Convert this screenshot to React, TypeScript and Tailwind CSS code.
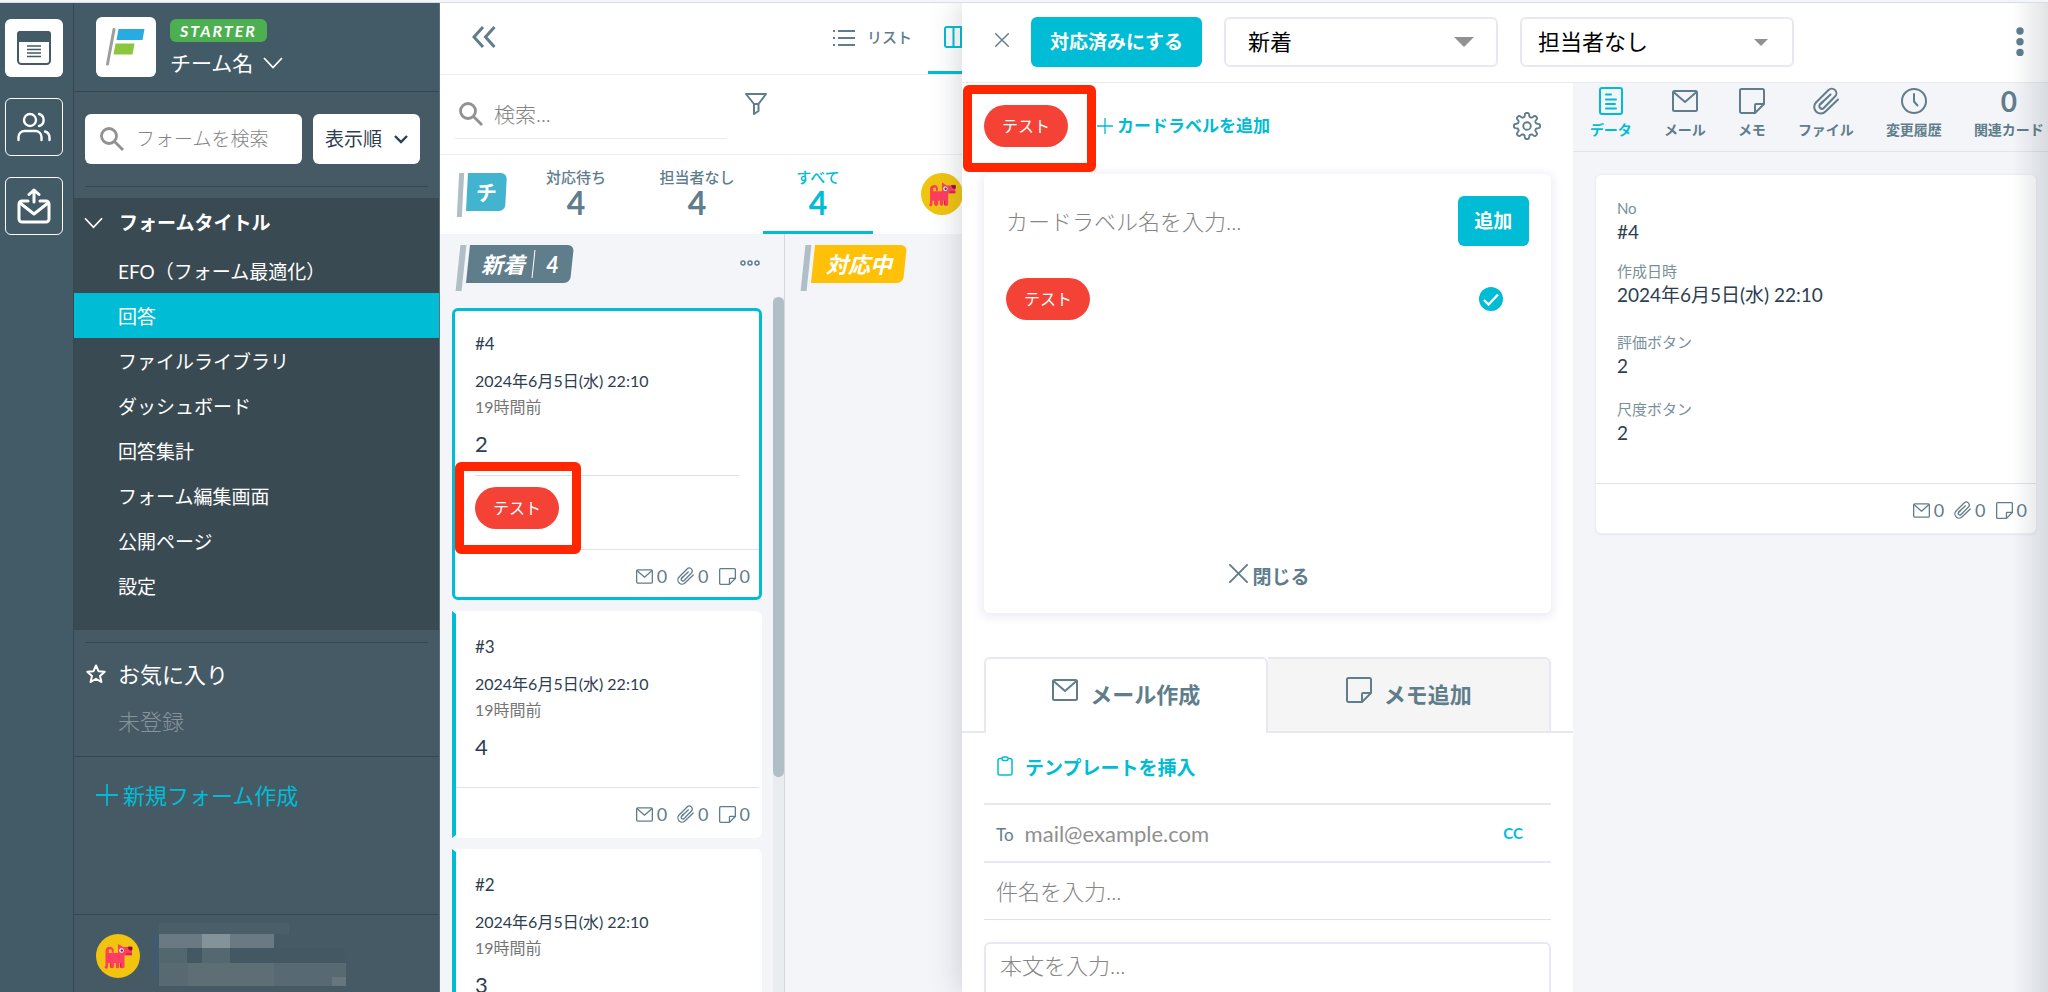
import React from 'react';

interface IconProps {
  className?: string;
}

interface BoardCard {
  no: string;
  value: string;
  labels: string[];
  selected?: boolean;
}

const menuItems = [
  'EFO（フォーム最適化）',
  '回答',
  'ファイルライブラリ',
  'ダッシュボード',
  '回答集計',
  'フォーム編集画面',
  '公開ページ',
  '設定',
];

const counters = [
  { label: '対応待ち', count: 4 },
  { label: '担当者なし', count: 4 },
  { label: 'すべて', count: 4, active: true },
];

const cards: BoardCard[] = [
  { no: '#4', value: '2', labels: ['テスト'], selected: true },
  { no: '#3', value: '4', labels: [] },
  { no: '#2', value: '3', labels: [] },
];

const details = [
  { label: 'No', value: '#4' },
  { label: '作成日時', value: '2024年6月5日(水) 22:10' },
  { label: '評価ボタン', value: '2' },
  { label: '尺度ボタン', value: '2' },
];

/* ---------- icons ---------- */

const MailIcon: React.FC<IconProps> = ({ className }) => (
  <svg viewBox="0 0 26 22" className={className} fill="none" stroke="currentColor" strokeWidth="2" strokeLinejoin="round">
    <rect x="1" y="1" width="24" height="20" rx="1.5" />
    <path d="M1.500 2l11.500 10L24.500 2" />
  </svg>
);

const NoteIcon: React.FC<IconProps> = ({ className }) => (
  <svg viewBox="0 0 26 26" className={className} fill="none" stroke="currentColor" strokeWidth="2" strokeLinejoin="round">
    <path d="M2.500 1h21a1.500 1.500 0 0 1 1.500 1.500V16l-9 9H2.500A1.500 1.500 0 0 1 1 23.500v-21A1.500 1.500 0 0 1 2.500 1z" />
    <path d="M16 25v-8a1 1 0 0 1 1-1h8" />
  </svg>
);

const ClipIcon: React.FC<IconProps> = ({ className }) => (
  <svg viewBox="0 0 26 28" className={className} fill="none" stroke="currentColor" strokeWidth="2" strokeLinecap="round">
    <path d="M25 12.500L12.500 24.500a6.500 6.500 0 0 1-9.500-9L15.500 3a4.600 4.600 0 0 1 6.700 6.300L10.800 21a2.600 2.600 0 0 1-3.800-3.600L17.500 7.500" />
    <path d="M7 17.400L10 14.500" />
  </svg>
);

const ClockIcon: React.FC<IconProps> = ({ className }) => (
  <svg viewBox="0 0 26 26" className={className} fill="none" stroke="currentColor" strokeWidth="2" strokeLinecap="round" strokeLinejoin="round">
    <circle cx="13" cy="13" r="12" />
    <path d="M13 6v7.500l3.500 4" />
  </svg>
);

const DataIcon: React.FC<IconProps> = ({ className }) => (
  <svg viewBox="0 0 24 28" className={className} fill="none" stroke="currentColor" strokeWidth="2">
    <rect x="1" y="1" width="22" height="26" rx="2" />
    <path d="M7 7.500h5M7 12.500h10M7 17h9M7 21.500h10" strokeLinecap="round" />
  </svg>
);

const SearchIcon: React.FC<IconProps> = ({ className }) => (
  <svg viewBox="0 0 24 24" className={className} fill="none" stroke="currentColor" strokeWidth="2.800">
    <circle cx="9" cy="9" r="7.500" />
    <path d="M14.500 14.500l8.500 8.500" />
  </svg>
);

const ChevronIcon: React.FC<IconProps> = ({ className }) => (
  <svg viewBox="0 0 20 12" className={className} fill="none" stroke="currentColor" strokeWidth="1.800">
    <path d="M1 1l9 9.500L19 1" />
  </svg>
);

const CloseIcon: React.FC<IconProps> = ({ className }) => (
  <svg viewBox="0 0 20 20" className={className} fill="none" stroke="currentColor" strokeWidth="2" strokeLinecap="round">
    <path d="M1 1l18 18M19 1L1 19" />
  </svg>
);

const PlusIcon: React.FC<IconProps> = ({ className }) => (
  <svg viewBox="0 0 22 22" className={className} fill="none" stroke="currentColor" strokeWidth="1.800">
    <path d="M11 0v22M0 11h22" />
  </svg>
);

// eight soft teeth around the hub
const gearOutline = Array.from({ length: 160 }, (_, i) => {
  const angle = (i / 160) * Math.PI * 2;
  const radius = 11.2 + 1.9 * Math.tanh(2.2 * Math.cos(8 * angle));
  return `${(14 + radius * Math.cos(angle)).toFixed(2)},${(14 + radius * Math.sin(angle)).toFixed(2)}`;
}).join(' ');

const GearIcon: React.FC<IconProps> = ({ className }) => (
  <svg viewBox="0 0 28 28" className={className} fill="none" stroke="currentColor" strokeWidth="1.900" strokeLinejoin="round">
    <polygon points={gearOutline} />
    <circle cx="14" cy="14" r="3.800" />
  </svg>
);

const DogAvatar: React.FC<IconProps> = ({ className }) => (
  <svg viewBox="0 0 44 44" className={className}>
    <circle cx="22" cy="22" r="22" fill="#f1c40f" />
    <path d="M14 28h3.200v4.500a1.500 1.500 0 0 1-3.200 0zM24 28h3.500v4.500a1.500 1.500 0 0 1-3.500 0z" fill="#d81b60" />
    <path d="M9.500 32V17a4.300 4.300 0 0 1 8.200-1.800v3.500h-2V16.500a1.500 1.500 0 0 0-3 .5v2H22V10l5 3h9v8.500h-7.500V33a1.700 1.700 0 0 1-3.300 0v-4h-2v4a1.700 1.700 0 0 1-3.300 0v-4h-2v4a1.700 1.700 0 0 1-3.300 0v-4h-2.600v4a1.700 1.700 0 0 1-3.500 0z" fill="#ff3d60" />
    <circle cx="25.500" cy="16.500" r="2.300" fill="#fff" />
    <circle cx="25.800" cy="16.500" r="1.300" fill="#37474f" />
    <path d="M32 13h4v3h-2.500zM30 20h6" fill="#8e0f3c" stroke="#8e0f3c" strokeWidth=".8" />
  </svg>
);

/* ---------- shared parts ---------- */

const LabelPill: React.FC<{ text: string }> = ({ text }) => (
  <span className="flex h-[42px] w-[84px] items-center justify-center rounded-full bg-[#f44336] text-base leading-none text-white">
    {text}
  </span>
);

const CardCounts: React.FC = () => (
  <div className="flex items-center justify-end gap-[10px] text-lg leading-none text-[#607d8b]">
    <span className="flex items-center gap-1">
      <MailIcon className="h-[15px] w-[17px]" />0
    </span>
    <span className="flex items-center gap-1">
      <ClipIcon className="h-[18px] w-[17px]" />0
    </span>
    <span className="flex items-center gap-1">
      <NoteIcon className="h-[17px] w-[17px]" />0
    </span>
  </div>
);

const StatusTag: React.FC<{ color: string; children: React.ReactNode }> = ({ color, children }) => (
  <div className="flex items-start gap-1">
    <span className="h-[46px] w-[6px] -skew-x-6 bg-[#b0bec5]" />
    <div className="relative flex h-[38px] items-center px-[13px] text-[22px] font-bold italic text-white">
      <span className={`absolute inset-0 -skew-x-6 rounded-r-md ${color}`} />
      <span className="relative flex items-center gap-2">{children}</span>
    </div>
  </div>
);

/* ---------- left side ---------- */

const IconRail: React.FC = () => (
  <nav className="flex w-[74px] shrink-0 flex-col gap-[21px] border-r border-[#37474f] bg-[#435b66] pt-4 pl-[5px] text-white">
    <button aria-label="フォーム" className="flex h-[58px] w-[58px] items-center justify-center rounded-md bg-white text-[#435b66]">
      <svg viewBox="0 0 34 34" className="h-[34px] w-[34px]" fill="none" stroke="currentColor" strokeWidth="2">
        <rect x="1" y="1" width="32" height="32" rx="3.500" />
        <path d="M1 3a2 2 0 0 1 2-2h28a2 2 0 0 1 2 2v7H1z" fill="currentColor" />
        <path d="M10 15h14M10 18.500h14M10 22h14M10 25.500h14" strokeWidth="1.600" />
      </svg>
    </button>
    <button aria-label="メンバー" className="flex h-[58px] w-[58px] items-center justify-center rounded-md border border-white">
      <svg viewBox="0 0 34 30" className="h-[30px] w-[34px]" fill="none" stroke="currentColor" strokeWidth="2.400" strokeLinecap="round">
        <circle cx="13" cy="8" r="6" />
        <path d="M1.500 28v-3a6 6 0 0 1 6-6h11a6 6 0 0 1 6 6v3M22 2a6.200 6.200 0 0 1 0 12M28 19.500a6.500 6.500 0 0 1 4.500 6V28" />
      </svg>
    </button>
    <button aria-label="送信" className="flex h-[58px] w-[58px] items-center justify-center rounded-md border border-white">
      <svg viewBox="0 0 34 36" className="h-9 w-[34px]" fill="none" stroke="currentColor" strokeWidth="3" strokeLinecap="round" strokeLinejoin="round">
        <path d="M11 13H5a3 3 0 0 0-3 3v15a3 3 0 0 0 3 3h24a3 3 0 0 0 3-3V16a3 3 0 0 0-3-3h-6" />
        <path d="M3 15l14 11 14-11M17 14V2M12 6.500L17 2l5 4.500" />
      </svg>
    </button>
  </nav>
);

const Sidebar: React.FC = () => (
  <aside className="flex w-[366px] shrink-0 flex-col border-r border-[#5f6f79] bg-[#465a65] text-white">
    <header className="flex h-[89px] shrink-0 gap-[14px] border-b border-[#37474f] bg-[#435b66] pt-[14px] pl-[22px]">
      <span className="flex h-[60px] w-[60px] items-center justify-center rounded-md bg-white">
        <svg viewBox="0 0 40 38" className="h-[38px] w-10">
          <path d="M8 1.500L1.500 36" stroke="#9e9e9e" strokeWidth="3" strokeLinecap="round" />
          <path d="M12.500 1h26L36.500 12H10.500z" fill="#29abe2" />
          <path d="M9.500 15.500H28.500L26.500 26.500H7.500z" fill="#8cc63f" />
        </svg>
      </span>
      <div>
        <span className="mt-[2px] flex h-[23px] w-[97px] items-center justify-center rounded-md bg-[#4caf50] text-base font-bold tracking-[2px] italic">
          STARTER
        </span>
        <button className="mt-[7px] flex items-center gap-[10px] text-[21px] leading-[28px]">
          チーム名
          <ChevronIcon className="h-3 w-5" />
        </button>
      </div>
    </header>

    <div className="mx-[11px] flex h-[95px] shrink-0 items-start gap-[11px] border-b border-[#37474f] pt-[22px]">
      <label className="flex h-[50px] w-[217px] items-center gap-3 rounded-md bg-white px-[15px] text-[#919191]">
        <SearchIcon className="h-6 w-6 shrink-0" />
        <input placeholder="フォームを検索" aria-label="フォームを検索" className="w-full min-w-0 text-[19px] placeholder:font-light placeholder:text-[#858585] focus:outline-none" />
      </label>
      <button className="flex h-[50px] w-[107px] items-center justify-between rounded-md bg-white px-3 text-[19px] text-[#2c3e50]">
        表示順
        <svg viewBox="0 0 14 9" className="h-[9px] w-[14px]" fill="none" stroke="currentColor" strokeWidth="2.400">
          <path d="M1 1l6 6 6-6" />
        </svg>
      </button>
    </div>

    <section className="mt-[11px] shrink-0 bg-[#394a52] pb-[22px]">
      <button className="flex h-[50px] w-full items-center gap-4 pl-[10px] text-[19px] font-bold">
        <ChevronIcon className="h-3 w-[19px]" />
        フォームタイトル
      </button>
      <ul>
        {menuItems.map((item) => (
          <li key={item}>
            <a
              href="#"
              className={`flex h-[45px] items-center pt-[3px] pl-11 text-[19px] ${item === '回答' ? 'bg-[#00bcd4]' : ''}`}
            >
              {item}
            </a>
          </li>
        ))}
      </ul>
    </section>

    <section className="shrink-0 border-b border-[#37474f] pt-3 pb-[18px]">
      <div className="mx-[11px] border-t border-[#37474f]" />
      <button className="mt-[15px] flex h-8 items-center gap-3 pl-3 text-[22px]">
        <svg viewBox="0 0 20 20" className="h-5 w-5" fill="none" stroke="currentColor" strokeWidth="2" strokeLinejoin="round">
          <path d="M10 1.500l2.500 5.700 6.200.6-4.700 4.100 1.400 6.100L10 14.800 4.600 18 6 11.900 1.300 7.800l6.200-.6z" />
        </svg>
        お気に入り
      </button>
      <p className="mt-4 pl-11 text-[22px] leading-8 font-light text-[#86949d]">未登録</p>
    </section>

    <button className="flex h-[76px] shrink-0 items-center gap-[5px] pl-[22px] text-[22px] text-[#00bcd4]">
      <PlusIcon className="h-[22px] w-[22px]" />
      新規フォーム作成
    </button>

    <footer className="mt-auto flex h-[78px] shrink-0 items-start gap-3 border-t border-[#37474f] pt-2 pl-[22px]">
      <DogAvatar className="mt-[11px] h-11 w-11" />
      {/* account name and address stay masked */}
      <svg viewBox="0 0 224 63" className="h-[63px] w-[224px]">
        <path d="M7 0h130v11H7z" fill="#4a5f69" />
        <path d="M0 11h7v43H0z" fill="#415a70" />
        <path d="M7 11h115v14H7z" fill="#697a82" />
        <path d="M50 11h28v14H50z" fill="#84929a" />
        <path d="M7 25h43v15H7z" fill="#53676f" />
        <path d="M35 25h15v15H35zM78 25h115v15H78z" fill="#435862" />
        <path d="M50 25h28v15H50z" fill="#536870" />
        <path d="M7 40h187v23H7z" fill="#576a72" />
        <path d="M36 40h86v23H36z" fill="#5d6e74" />
        <path d="M180 54h14v9h-14z" fill="#65767e" />
      </svg>
    </footer>
  </aside>
);

/* ---------- board ---------- */

const AnswerCard: React.FC<{ card: BoardCard }> = ({ card }) => (
  <article
    className={
      card.selected
        ? 'rounded-md border-[3px] border-[#00bcd4] bg-white'
        : 'rounded-r-md border-y-[3px] border-r-[3px] border-l-4 border-y-white border-r-white border-l-[#00bcd4] bg-white'
    }
  >
    <div className={card.selected ? 'px-5 pt-[21px]' : 'pr-5 pl-[19px] pt-[21px]'}>
      <p className="text-[17px] leading-6 text-[#2c3e50]">{card.no}</p>
      <p className="mt-[13px] text-base leading-6 text-[#2c3e50]">2024年6月5日(水) 22:10</p>
      <p className="mt-[2px] text-base leading-6 text-[#757575]">19時間前</p>
      <p className="mt-[9px] text-[22px] leading-8 text-[#2c3e50]">{card.value}</p>
      {card.labels.length > 0 ? (
        <div className="mt-[15px] border-t border-[#e0e0e0] pt-[11px] pb-5">
          {card.labels.map((label) => (
            <div key={label} className="relative w-fit">
              <LabelPill text={label} />
              <span className="absolute -top-[25px] -left-5 h-[92px] w-[126px] rounded-md border-[9px] border-[#ff2600]" />
            </div>
          ))}
        </div>
      ) : (
        <div className="h-6" />
      )}
    </div>
    <div className="border-t border-[#e0e4e8] pt-[17px] pr-[9px] pb-[10px]">
      <div className="h-5">
        <CardCounts />
      </div>
    </div>
  </article>
);

const Board: React.FC = () => (
  <main className="flex min-w-0 flex-1 flex-col bg-white text-[#607d8b]">
    <header className="flex h-[72px] shrink-0 items-stretch border-b border-[#eceff1] pl-8">
      <button aria-label="サイドバーを閉じる">
        <svg viewBox="0 0 24 22" className="-mt-1 h-[22px] w-6" fill="none" stroke="currentColor" strokeWidth="3">
          <path d="M11 1L2 11l9 10M22.500 1l-9 10 9 10" />
        </svg>
      </button>
      <button className="ml-[337px] flex items-center gap-3 pb-[2px] text-[15px] font-medium">
        <svg viewBox="0 0 22 18" className="h-[18px] w-[22px]" stroke="currentColor" strokeWidth="2">
          <path d="M5 2h17M5 9h17M5 16h17M0 2h2M0 9h2M0 16h2" />
        </svg>
        リスト
      </button>
      <button className="ml-4 flex items-center gap-3 border-b-[3px] border-[#00bcd4] pr-4 pl-4 text-[15px] font-medium text-[#00bcd4]">
        <svg viewBox="0 0 26 22" className="h-[22px] w-[26px]" fill="none" stroke="currentColor" strokeWidth="2">
          <rect x="1" y="1" width="24" height="20" rx="2" />
          <path d="M9.500 1v20M17 1v20" />
        </svg>
        ボード
      </button>
    </header>

    <div className="flex h-20 shrink-0 items-start gap-[18px] border-b border-[#eceff1] pt-[18px] pl-[15px]">
      <label className="flex h-[46px] w-[272px] items-center gap-[11px] border-b border-[#e8eaec] pb-1 pl-1 text-[#919191]">
        <SearchIcon className="h-6 w-6 shrink-0" />
        <input placeholder="検索..." aria-label="検索" className="w-full min-w-0 text-[21px] placeholder:font-light placeholder:text-[#858585] focus:outline-none" />
      </label>
      <button aria-label="絞り込み">
        <svg viewBox="0 0 22 22" className="h-[22px] w-[22px]" fill="none" stroke="currentColor" strokeWidth="2" strokeLinejoin="round">
          <path d="M1 1h20l-7.500 10v7L9 21V11zM9 11h4.500" />
        </svg>
      </button>
    </div>

    <div className="flex h-[79px] shrink-0">
      <div className="flex items-start gap-1 pt-[18px] pl-[18px]">
        <span className="h-11 w-[5px] -skew-x-3 bg-[#b0bec5]" />
        <div className="relative flex h-[38px] w-[39px] items-center justify-center text-[21px] font-bold text-white">
          <span className="absolute inset-0 -skew-x-3 rounded-r-md bg-[#42b4cf]" />
          <span className="relative">チ</span>
        </div>
      </div>
      <div className="ml-[15px] flex gap-[11px]">
        {counters.map((counter) => (
          <button
            key={counter.label}
            className={`flex w-[110px] flex-col items-center border-b-[3px] pt-3 font-medium ${
              counter.active ? 'border-[#00bcd4] text-[#00bcd4]' : 'border-transparent'
            }`}
          >
            <span className="text-[15px] leading-5">{counter.label}</span>
            <span className="text-[32px] leading-8 font-bold">{counter.count}</span>
          </button>
        ))}
      </div>
      <DogAvatar className="mt-[18px] ml-12 h-[42px] w-[42px]" />
    </div>

    <div className="flex min-h-0 flex-1 bg-[#f4f5f9]">
      <section className="flex w-[345px] shrink-0 flex-col border-r border-[#d5d9dd]">
        <div className="flex h-[63px] shrink-0 items-start justify-between pt-[11px] pr-6 pl-[18px]">
          <StatusTag color="bg-[#607d8b]">
            新着
            <span className="h-[28px] w-px -skew-x-6 bg-white" />
            <span className="pl-1">4</span>
          </StatusTag>
          <button aria-label="列メニュー" className="mt-[15px]">
            <svg viewBox="0 0 20 6" className="h-[6px] w-5" fill="none" stroke="currentColor" strokeWidth="1.500">
              <circle cx="3" cy="3" r="2" />
              <circle cx="10" cy="3" r="2" />
              <circle cx="17" cy="3" r="2" />
            </svg>
          </button>
        </div>
        <div className="flex min-h-0 flex-1 justify-between overflow-hidden">
          <div className="flex flex-1 flex-col gap-[11px] pt-[11px] pr-[11px] pl-3">
            {cards.map((card) => (
              <AnswerCard key={card.no} card={card} />
            ))}
          </div>
          <div className="w-[11px] bg-[#e9edf0]">
            <div className="h-[69%] rounded-full bg-[#b0bec5]" />
          </div>
        </div>
      </section>
      <section className="flex-1 pt-[11px] pl-[18px]">
        <StatusTag color="bg-[#ffc107]">対応中</StatusTag>
      </section>
    </div>
  </main>
);

/* ---------- drawer ---------- */

const LabelEditor: React.FC = () => (
  <>
    <div className="flex h-[91px] shrink-0 items-center pr-8 pb-[5px] pl-[22px]">
      <div className="relative">
        <LabelPill text="テスト" />
        <span className="absolute -top-5 -left-[21px] h-[87px] w-[133px] rounded-md border-[9px] border-[#ff2600]" />
      </div>
      <button className="ml-[29px] flex items-center gap-1 text-[17px] font-bold text-[#00bcd4]">
        <PlusIcon className="h-4 w-4" />
        カードラベルを追加
      </button>
      <button aria-label="ラベル設定" className="ml-auto text-[#607d8b]">
        <GearIcon className="h-7 w-7" />
      </button>
    </div>
    <section className="mx-[22px] flex h-[439px] shrink-0 flex-col rounded-md bg-white px-[22px] pt-[22px] pb-5 shadow-[0_2px_10px_3px_#ededf7]">
      <div className="flex h-[50px] items-center justify-between gap-4">
        <input placeholder="カードラベル名を入力..." aria-label="カードラベル名" className="min-w-0 flex-1 text-[22px] placeholder:font-light placeholder:text-[#858585] focus:outline-none" />
        <button className="h-[50px] w-[71px] rounded-md bg-[#00bcd4] text-[19px] font-bold text-white">追加</button>
      </div>
      <div className="mt-8 flex items-center justify-between pr-[26px]">
        <LabelPill text="テスト" />
        <svg viewBox="0 0 24 24" className="h-6 w-6">
          <circle cx="12" cy="12" r="12" fill="#00bcd4" />
          <path d="M5 13l4.500 4.500L19 7.500" fill="none" stroke="#fff" strokeWidth="2.400" />
        </svg>
      </div>
      <button className="mx-auto mt-auto flex items-center gap-1 pl-1 text-[19px] leading-8 font-bold text-[#607d8b]">
        <CloseIcon className="mb-2 h-[19px] w-[19px]" />
        閉じる
      </button>
    </section>
  </>
);

const MailComposer: React.FC = () => (
  <>
    <div className="mt-11 flex h-[76px] shrink-0 text-[22px] font-bold text-[#607d8b]" role="tablist">
      <span className="w-[22px] border-b-2 border-[#e8e8f4]" />
      <button role="tab" className="flex flex-1 items-center justify-center gap-3 rounded-t-md border-x-2 border-t-2 border-[#e8e8f4] pb-1">
        <MailIcon className="mb-2 h-[22px] w-[26px]" />
        メール作成
      </button>
      <button role="tab" className="flex flex-1 items-center justify-center gap-3 rounded-tr-md border-y-2 border-r-2 border-[#e8e8f4] bg-[#f5f5f5] pb-[2px]">
        <NoteIcon className="mb-2 h-[26px] w-[26px]" />
        メモ追加
      </button>
      <span className="w-[22px] border-b-2 border-[#e8e8f4]" />
    </div>
    <div className="px-[22px]">
      <button className="flex h-[72px] w-full items-center gap-3 border-b-2 border-[#e8e8f4] pl-[13px] text-[19px] font-bold text-[#00bcd4]">
        <svg viewBox="0 0 16 20" className="mb-1 h-5 w-4" fill="none" stroke="currentColor" strokeWidth="1.500">
          <rect x="1" y="2.500" width="14" height="16.500" rx="2" />
          <rect x="5" y="1" width="6" height="3.500" rx="1.500" fill="#fff" />
        </svg>
        テンプレートを挿入
      </button>
      <div className="flex h-[58px] items-center gap-[11px] border-b-2 border-[#e8e8f4] pr-7 pl-3 text-[17px] text-[#607d8b]">
        <label htmlFor="mail-to" className="pt-[3px]">To</label>
        <input id="mail-to" type="email" placeholder="mail@example.com" className="min-w-0 flex-1 text-[22px] placeholder:text-[#8f8f8f] focus:outline-none" />
        <button className="text-[15px] font-bold text-[#00bcd4]">CC</button>
      </div>
      <input placeholder="件名を入力..." aria-label="件名" className="block h-[57px] w-full border-b border-[#e0e0f0] px-3 text-[22px] placeholder:font-light placeholder:text-[#858585] focus:outline-none" />
      <textarea placeholder="本文を入力..." aria-label="本文" className="mt-[22px] block h-40 w-full resize-none rounded-md border-2 border-[#e8e8f4] px-[14px] py-[6px] text-[22px] leading-8 placeholder:font-light placeholder:text-[#858585] focus:outline-none" />
    </div>
  </>
);

const detailTabs = [
  { label: 'データ', icon: <DataIcon className="h-7 w-6" />, active: true },
  { label: 'メール', icon: <MailIcon className="h-[22px] w-[26px]" /> },
  { label: 'メモ', icon: <NoteIcon className="h-[26px] w-[26px]" /> },
  { label: 'ファイル', icon: <ClipIcon className="h-7 w-[26px]" /> },
  { label: '変更履歴', icon: <ClockIcon className="h-[26px] w-[26px]" /> },
  { label: '関連カード', icon: <span className="text-[28px] leading-7">0</span> },
];

const DetailPane: React.FC = () => (
  <div className="min-w-0 bg-[#f4f5f9]">
    <div className="flex h-[69px] gap-8 border-b border-[#e2e4ea] pt-1 pl-[17px] text-[#607d8b]">
      {detailTabs.map((tab) => (
        <button
          key={tab.label}
          className={`flex shrink-0 flex-col items-center gap-[5px] font-bold ${tab.active ? 'text-[#00bcd4]' : ''}`}
        >
          <span className="flex h-7 items-center">{tab.icon}</span>
          <span className="text-sm leading-5">{tab.label}</span>
        </button>
      ))}
    </div>
    <section className="mt-[22px] mr-[11px] ml-[22px] rounded-md border border-[#ededf7] bg-white shadow-[0_1px_2px_#e6e6f2]">
      <dl className="flex flex-col gap-[19px] px-[21px] pt-[21px] pb-[38px]">
        {details.map((item) => (
          <div key={item.label} className="first:-mb-1 nth-2:mb-1">
            <dt className="text-[15px] leading-6 text-[#78909c]">{item.label}</dt>
            <dd className="text-[19px] leading-6 text-[#2c3e50]">{item.value}</dd>
          </div>
        ))}
      </dl>
      <div className="border-t border-[#e0e4ea] pt-[17px] pr-[9px] pb-3">
        <div className="h-5">
          <CardCounts />
        </div>
      </div>
    </section>
  </div>
);

const Drawer: React.FC = () => (
  <div className="absolute inset-y-0 right-0 left-[522px] flex flex-col bg-white shadow-[0_0_30px_rgba(55,71,79,0.25)]">
    <header className="flex h-20 shrink-0 items-center gap-[22px] border-b border-[#e8eaee] pr-6 pb-px pl-[33px]">
      <button aria-label="閉じる" className="mb-1 text-[#607d8b]">
        <CloseIcon className="h-[14px] w-[14px]" />
      </button>
      <button className="h-[50px] w-[171px] rounded-md bg-[#00bcd4] text-[19px] font-bold text-white">対応済みにする</button>
      <div className="relative">
        <select aria-label="ステータス" className="h-[50px] w-[274px] appearance-none rounded-md border-2 border-[#e8e8f4] bg-white px-[22px] pb-[2px] text-[22px] text-black">
          <option>新着</option>
        </select>
        <svg viewBox="0 0 20 10" className="pointer-events-none absolute top-5 right-6 h-[10px] w-5" fill="#919191">
          <path d="M0 0h20L10 10z" />
        </svg>
      </div>
      <div className="relative">
        <select aria-label="担当者" className="h-[50px] w-[274px] appearance-none rounded-md border-2 border-[#e8e8f4] bg-white px-4 pb-[2px] text-[22px] text-black">
          <option>担当者なし</option>
        </select>
        <svg viewBox="0 0 14 7" className="pointer-events-none absolute top-[22px] right-[26px] h-[7px] w-[14px]" fill="#919191">
          <path d="M0 0h14L7 7z" />
        </svg>
      </div>
      <button aria-label="その他" className="ml-auto text-[#607d8b]">
        <svg viewBox="0 0 8 30" className="h-[30px] w-2" fill="currentColor">
          <circle cx="4" cy="4" r="3.700" />
          <circle cx="4" cy="14.700" r="3.700" />
          <circle cx="4" cy="25.400" r="3.700" />
        </svg>
      </button>
    </header>
    <div className="grid min-h-0 flex-1 grid-cols-[9fr_7fr] overflow-hidden">
      <div className="flex min-w-0 flex-col">
        <LabelEditor />
        <MailComposer />
      </div>
      <DetailPane />
    </div>
    <span className="pointer-events-none absolute inset-y-0 right-0 w-9 bg-linear-to-l from-[#37474f]/15 to-transparent" />
  </div>
);

const App: React.FC = () => {
  return (
    <div
      lang="ja"
      className="flex h-screen flex-col overflow-hidden font-['Lato','Noto_Sans_CJK_JP',sans-serif]"
    >
      <div className="h-[3px] shrink-0 border-b border-[#d5dde6] bg-[#f4f5f9]" />
      <div className="relative flex min-h-0 flex-1">
        <IconRail />
        <Sidebar />
        <div className="relative flex min-w-0 flex-1 overflow-hidden">
          <Board />
          <Drawer />
        </div>
      </div>
    </div>
  );
};

export default App;
